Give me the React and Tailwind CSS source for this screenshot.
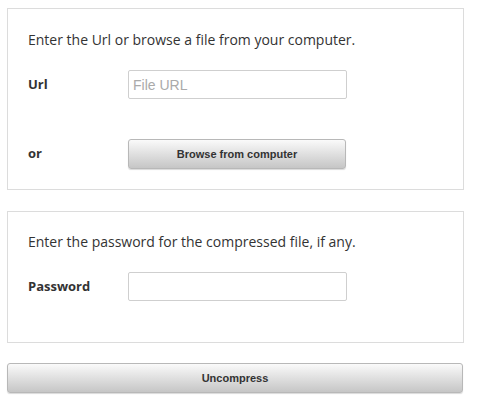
const sans = { fontFamily: '"Open Sans", "Liberation Sans", sans-serif' };

function Row({ label, children }) {
  return (
    <div className="flex items-center">
      <div className="w-[100px] text-[13px] font-bold text-[#333]">{label}</div>
      {children}
    </div>
  );
}

const btn =
  "h-[30px] rounded-[3px] border border-[#b8b8b8] bg-gradient-to-b from-[#fafafa] to-[#c6c6c6] text-[11px] font-bold text-[#333] font-['Liberation_Sans',Arial,sans-serif] shadow-[0_1px_1px_rgba(0,0,0,0.15)]";

export default function App() {
  return (
    <div className="w-[478px] h-[411px] bg-white pl-[7px] pt-[8px]" style={sans}>
      <div className="w-[457px] border border-[#dcdcdc] px-[20px] pt-[21px] pb-[20px]">
        <p className="text-[14px] leading-[20px] text-[#333] mb-[20px]">
          Enter the Url or browse a file from your computer.
        </p>
        <Row label="Url">
          <input
            placeholder="File URL"
            className="w-[219px] h-[29px] border border-[#cfcfcf] rounded-[2px] px-[4px] text-[14px] font-['Liberation_Sans',Arial,sans-serif] placeholder:text-[#aaa] outline-none"
          />
        </Row>
        <div className="h-[40px]" />
        <Row label="or">
          <button className={`${btn} w-[218px]`}>Browse from computer</button>
        </Row>
      </div>

      <div className="w-[457px] mt-[21px] border border-[#dcdcdc] px-[20px] pt-[20px] pb-[41px]">
        <p className="text-[14px] leading-[20px] text-[#333] mb-[20px]">
          Enter the password for the compressed file, if any.
        </p>
        <Row label="Password">
          <input
            type="password"
            className="w-[219px] h-[29px] border border-[#cfcfcf] rounded-[2px] px-[4px] text-[14px] outline-none"
          />
        </Row>
      </div>

      <button className={`${btn} w-[456px] mt-[20px] block`}>Uncompress</button>
    </div>
  );
}
